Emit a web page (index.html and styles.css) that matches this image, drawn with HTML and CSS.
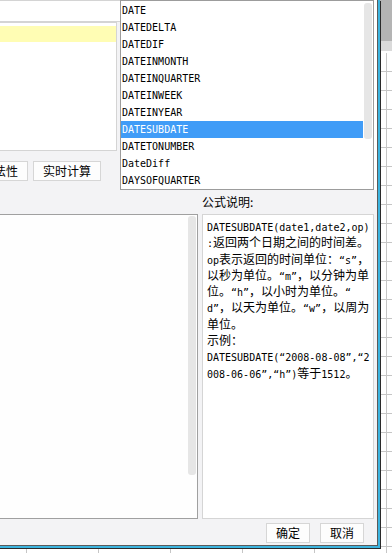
FILE: index.html
```html
<!DOCTYPE html>
<html lang="zh-CN">
<head>
    <meta charset="UTF-8">
    <meta name="viewport" content="width=device-width, initial-scale=1.0">
    <title>公式编辑</title>
    <link rel="stylesheet" href="styles.css">
</head>
<body>
    <div class="dialog">
        <div class="formula-input"></div>

        <div class="fn-list">
            <div class="fn-row selected"></div>
        </div>

        <div class="actions">
            <button class="btn">检查合法性</button>
            <button class="btn">实时计算</button>
        </div>

        <div class="main">
            <div class="help-title">公式说明:</div>
            <div class="editor">
                <div class="thumb editor-thumb"></div>
            </div>
            <div class="help-box">
                <span class="en">DATESUBDATE(date1,date2,op)</span><br>
                <span class="en">:</span>返回两个日期之间的时间差。<br>
                <span class="en">op</span>表示返回的时间单位：<span class="en">“s”</span>，<br>
                以秒为单位。<span class="en">“m”</span>，以分钟为单<br>
                位。<span class="en">“h”</span>，以小时为单位。<span class="en">“</span><br>
                <span class="en">d”</span>，以天为单位。<span class="en">“w”</span>，以周为<br>
                单位。<br>
                示例：<br>
                <span class="en">DATESUBDATE(“2008-08-08”,“2</span><br>
                <span class="en">008-06-06”,“h”)</span>等于<span class="en">1512</span>。
            </div>
        </div>

        <div class="footer">
            <button class="btn">确定</button>
            <button class="btn">取消</button>
        </div>

        <!-- 函数下拉列表 -->
        <div class="dropdown">
            <div class="dd-items">
                <div class="dd-item">DATE</div>
                <div class="dd-item">DATEDELTA</div>
                <div class="dd-item">DATEDIF</div>
                <div class="dd-item">DATEINMONTH</div>
                <div class="dd-item">DATEINQUARTER</div>
                <div class="dd-item">DATEINWEEK</div>
                <div class="dd-item">DATEINYEAR</div>
                <div class="dd-item active">DATESUBDATE</div>
                <div class="dd-item">DATETONUMBER</div>
                <div class="dd-item">DateDiff</div>
                <div class="dd-item">DAYSOFQUARTER</div>
            </div>
            <div class="thumb dd-thumb"></div>
        </div>
    </div>
</body>
</html>
```

FILE: styles.css
```css
* {
    box-sizing: border-box;
}

html,
body {
    margin: 0;
    padding: 0;
}

body {
    width: 392px;
    height: 553px;
    overflow: hidden;
    font-family: "Noto Sans CJK SC", sans-serif;
    font-size: 12px;
    color: #000;
    background:
        linear-gradient(#b4b4b4 0 41px, #dadada 41px 51px, #fff 51px) 0 0 / 100% 53px no-repeat,
        linear-gradient(to right, transparent 71px, #c6c6c6 71px) -45px 0 / 72px 100%,
        linear-gradient(transparent 18px, #c6c6c6 18px) 0 -4px / 100% 19px,
        #fff;
}

.dialog {
    position: relative;
    width: 442px;
    height: 548px;
    margin-left: -62px;
    padding: 0 4px 3px 10px;
    background: #f3f3f5;
    border-right: 2px solid #3cb4df;
    border-bottom: 2px solid #3cb4df;
    box-shadow: 1px 1px 0 #2a2a2a, inset -1px -1px 0 #5a5a5a;
}

.formula-input {
    height: 22px;
    background: #fff;
    border: 1px solid #d4d4d4;
}

.fn-list {
    width: 169px;
    height: 129px;
    padding-top: 3px;
    background: #fff;
    border: 1px solid #d4d4d4;
}

.fn-row {
    height: 16px;
}

.fn-row.selected {
    background: #fffdb4;
}

.actions {
    display: flex;
    gap: 5px;
    margin-top: 10px;
}

.btn {
    height: 20px;
    margin: 0;
    padding: 0 9px;
    font-family: "Noto Sans CJK SC", sans-serif;
    font-size: 12px;
    line-height: 18px;
    color: #000;
    background: #fdfdfd;
    border: 1px solid #d6d6d6;
    border-radius: 0;
}

.main {
    display: grid;
    grid-template-columns: 250px 172px;
    grid-template-rows: 25px 305px;
    column-gap: 4px;
    margin-top: 8px;
}

.help-title {
    grid-column: 2;
    grid-row: 1;
    line-height: 25px;
}

.editor {
    grid-column: 1;
    grid-row: 2;
    display: flex;
    justify-content: flex-end;
    align-items: flex-start;
    padding: 1px 1px 0 0;
    background: #fefefe;
    border: 1px solid #a0a0a0;
}

.thumb {
    width: 8px;
    background: #e6e6e6;
    border-radius: 3px;
}

.editor-thumb {
    height: 259px;
}

.help-box {
    grid-column: 2;
    grid-row: 2;
    padding: 3px 0 0 4px;
    background: #fff;
    border: 1px solid #d5d5d5;
    line-height: 16.3px;
    white-space: nowrap;
    overflow: hidden;
}

.en {
    font-family: "DejaVu Sans Mono", monospace;
    font-size: 10px;
    line-height: 10px;
}

.footer {
    display: flex;
    justify-content: flex-end;
    gap: 10px;
    margin-top: 4px;
    padding-right: 10px;
}

.dropdown {
    position: absolute;
    top: 0;
    left: 182px;
    width: 254px;
    height: 190px;
    display: flex;
    align-items: flex-start;
    padding-top: 1px;
    background: #fff;
    border: 1px solid #9c9c9c;
    box-shadow: 3px 0 0 #fff;
}

.dd-items {
    width: 242px;
}

.dd-item {
    height: 17px;
    padding-left: 1px;
    font-family: "DejaVu Sans Mono", monospace;
    font-size: 10px;
    line-height: 17px;
}

.dd-item.active {
    background: #409cf7;
    color: #fff;
}

.dd-thumb {
    height: 136px;
    margin: 1px 1px 0 1px;
}
```
